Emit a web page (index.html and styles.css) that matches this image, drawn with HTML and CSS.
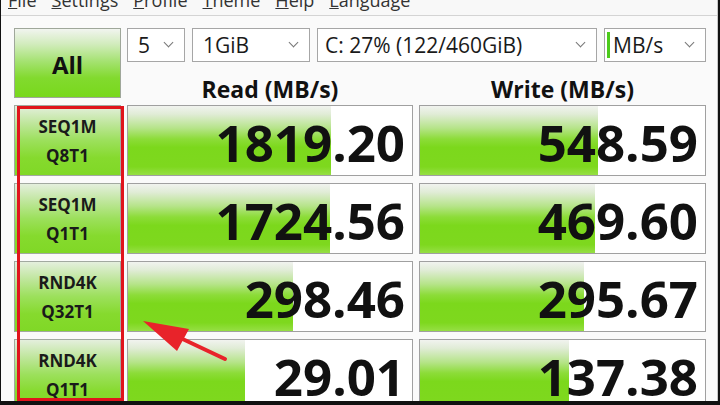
FILE: index.html
```html
<!DOCTYPE html>
<html>
<head>
<meta charset="utf-8">
<link rel="stylesheet" href="styles.css">
</head>
<body>
<div class="window">
  <div class="menubar">
    <span class="menu"><u>F</u>ile</span>
    <span class="menu"><u>S</u>ettings</span>
    <span class="menu"><u>P</u>rofile</span>
    <span class="menu"><u>T</u>heme</span>
    <span class="menu"><u>H</u>elp</span>
    <span class="menu"><u>L</u>anguage</span>
  </div>
  <div class="main">
    <div class="all-btn">All</div>
    <div class="controls">
      <div class="select s-count"><span>5</span><span class="chev"></span></div>
      <div class="select s-size"><span>1GiB</span><span class="chev"></span></div>
      <div class="select s-drive"><span>C: 27% (122/460GiB)</span><span class="chev"></span></div>
      <div class="select s-unit"><span class="unit-mark"></span><span>MB/s</span><span class="chev"></span></div>
    </div>
    <div class="head">Read (MB/s)</div>
    <div class="head">Write (MB/s)</div>

    <div class="label">SEQ1M<br>Q8T1</div>
    <div class="value"><div class="bar" style="width:203px"></div><span class="num">1819.20</span></div>
    <div class="value"><div class="bar" style="width:178px"></div><span class="num">548.59</span></div>

    <div class="label">SEQ1M<br>Q1T1</div>
    <div class="value"><div class="bar" style="width:202px"></div><span class="num">1724.56</span></div>
    <div class="value"><div class="bar" style="width:175px"></div><span class="num">469.60</span></div>

    <div class="label">RND4K<br>Q32T1</div>
    <div class="value"><div class="bar" style="width:165px"></div><span class="num">298.46</span></div>
    <div class="value"><div class="bar" style="width:164px"></div><span class="num">295.67</span></div>

    <div class="label">RND4K<br>Q1T1</div>
    <div class="value"><div class="bar" style="width:117px"></div><span class="num">29.01</span></div>
    <div class="value"><div class="bar" style="width:149px"></div><span class="num">137.38</span></div>
  </div>
  <div class="highlight"></div>
  <svg class="arrow" width="720" height="405" viewBox="0 0 720 405">
    <line x1="225" y1="359" x2="172" y2="334" stroke="#e8232a" stroke-width="4" stroke-linecap="round"/>
    <polygon points="143,321 189,329 177,351" fill="#e8232a"/>
  </svg>
</div>
</body>
</html>
```

FILE: styles.css
```css
* { box-sizing: border-box; }
html, body { margin: 0; padding: 0; }
body {
  width: 720px;
  height: 405px;
  overflow: hidden;
  background: #111;
  font-family: "Open Sans", "Noto Sans", "Liberation Sans", sans-serif;
  color: #111;
}
.window {
  position: relative;
  width: 717px;
  height: 401px;
  margin-left: 1px;
  background: #fafafa;
  border-right: 1px solid #c8c8c8;
  overflow: hidden;
}
.menubar {
  height: 16px;
  border-bottom: 1px solid #d4d4d4;
  display: flex;
  gap: 15px;
  padding-left: 7px;
  overflow: hidden;
  background: #f8f8f8;
}
.menu {
  font-size: 18px;
  line-height: 1;
  margin-top: -9px;
  color: #333;
  white-space: nowrap;
}
.main {
  display: grid;
  grid-template-columns: 107px 286px 287px;
  grid-template-rows: 34px 29px 71px 71px 71px 71px;
  column-gap: 6px;
  row-gap: 7px;
  padding: 12px 0 0 13px;
}
.all-btn {
  grid-row: 1 / 3;
  border: 1px solid #9fa79a;
  background: linear-gradient(to bottom, #f1f4ef 0%, #d2ecbd 22%, #a4e270 48%, #82da2e 72%, #78d81c 100%);
  display: flex;
  align-items: center;
  justify-content: center;
  font-weight: 700;
  font-size: 24px;
  padding-top: 2px;
}
.controls {
  grid-column: 2 / 4;
  display: flex;
  gap: 7px;
}
.select {
  height: 34px;
  border: 1px solid #a6a6a6;
  background: #fff;
  display: flex;
  align-items: center;
  padding-left: 10px;
  padding-right: 12px;
  font-size: 21px;
  color: #1a1a1a;
  position: relative;
}
.select span:first-child { flex: none; }
.chev {
  margin-left: auto;
  width: 7px;
  height: 7px;
  border-right: 1.5px solid #777;
  border-bottom: 1.5px solid #777;
  transform: rotate(45deg);
  margin-top: -5px;
}
.s-count { width: 58px; }
.s-size { width: 118px; }
.s-drive { width: 280px; padding-left: 7px; }
.s-unit { width: 102px; padding-left: 2px; }
.unit-mark {
  width: 3px;
  height: 26px;
  background: #4ccb1c;
  margin-right: 3px;
}
.head {
  font-weight: 700;
  font-size: 23px;
  text-align: center;
  line-height: 29px;
  padding-top: 6px;
  white-space: nowrap;
}
.label {
  border: 1px solid #a2a9a0;
  background: linear-gradient(to bottom, #e4efdd 0%, #bfe69c 25%, #9ce05c 50%, #86da2e 75%, #80d826 100%);
  text-align: center;
  font-weight: 700;
  font-size: 17px;
  line-height: 29px;
  padding-top: 6px;
  color: #1a1a1a;
}
.value {
  position: relative;
  border: 1px solid #a0a0a0;
  background: #fff;
  display: flex;
  align-items: center;
  justify-content: flex-end;
  padding-right: 7px;
  overflow: hidden;
}
.bar {
  position: absolute;
  left: 0;
  top: 0;
  bottom: 0;
  background: linear-gradient(to bottom, #f1f3ef 0%, #e0ecd6 12%, #b6e48a 32%, #8cdc38 48%, #7cd81c 60%, #7ed81e 88%, #96df44 100%);
}
.num {
  position: relative;
  font-weight: 700;
  font-size: 51px;
  letter-spacing: 0;
  line-height: 1;
  margin-top: 4px;
}
.highlight {
  position: absolute;
  left: 16px;
  top: 106px;
  width: 107px;
  height: 295px;
  border: 3px solid #e0141c;
}
.arrow {
  position: absolute;
  left: -1px;
  top: 0;
  pointer-events: none;
}
```
